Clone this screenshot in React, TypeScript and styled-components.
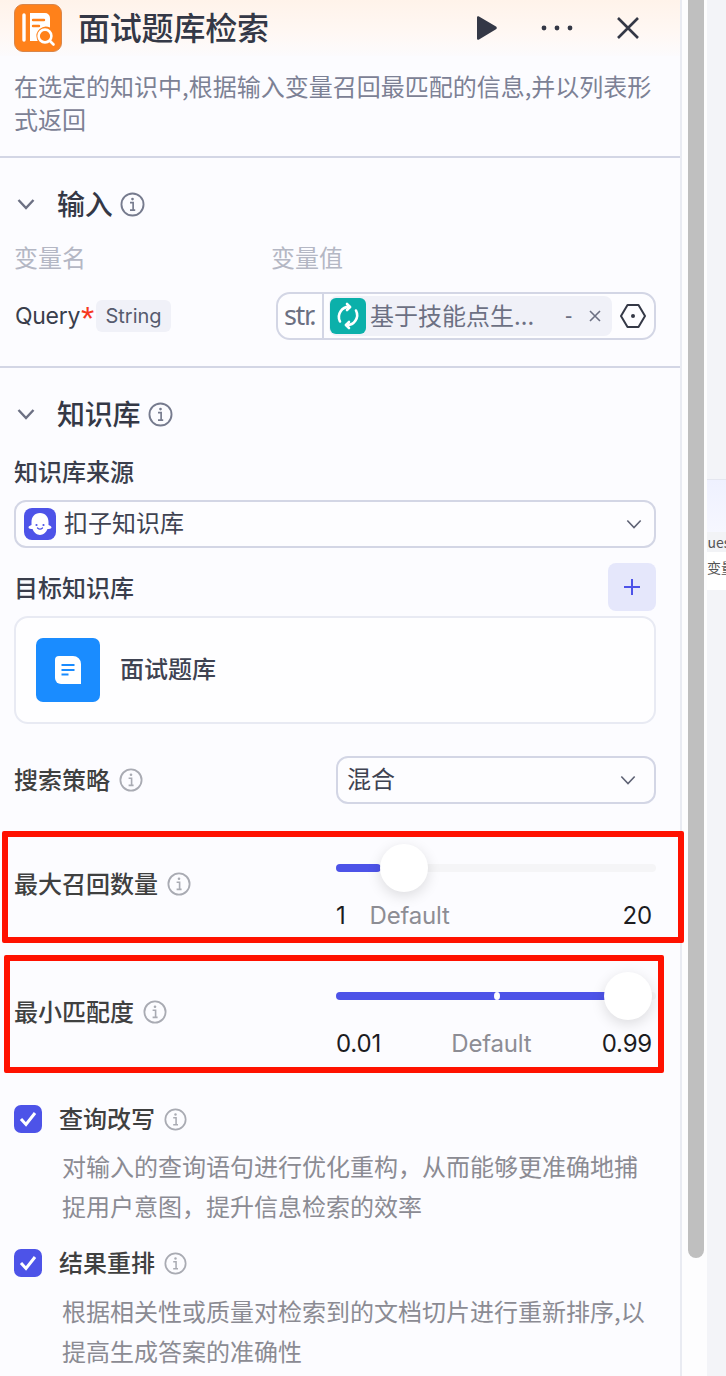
import React from "react";
import styled, { createGlobalStyle } from "styled-components";

const Global = createGlobalStyle`
  html, body { margin: 0; padding: 0; background: #fcfcff; }
  body { font-family: "Noto Sans CJK SC", "Noto Sans", sans-serif; }
  * { box-sizing: border-box; }
`;

const Page = styled.div`
  display: flex;
  width: 726px;
  height: 1376px;
  overflow: hidden;
`;
const Panel = styled.main`
  position: relative;
  z-index: 1;
  flex: 0 0 682px;
  height: 1376px;
  background: #fcfcff;
  border-right: 2px solid #e9ebf2;
`;
const Header = styled.header`
  display: flex;
  align-items: center;
  height: 56px;
  padding-left: 14px;
  background: linear-gradient(180deg, #fff3ea 0%, #fff8f4 60%, #fcfbfd 100%);
`;
const Logo = styled.div`
  flex: none;
  width: 48px;
  height: 48px;
  border-radius: 9px;
  background: #ff811a;
  border: 1.5px solid #d9864a;
  display: flex;
  align-items: center;
  justify-content: center;
`;
const Title = styled.h1`
  margin: 0 0 4px 16px;
  font-size: 32px;
  line-height: 44px;
  font-weight: 500;
  color: #343846;
  letter-spacing: -0.2px;
`;
const HeaderActions = styled.div`
  margin-left: auto;
  display: flex;
  align-items: center;
  padding-right: 40px;
`;
const ActionSlot = styled.div<{ $w: number }>`
  width: ${(p) => p.$w}px;
  display: flex;
  justify-content: center;
`;
const Description = styled.p`
  margin: 0;
  padding: 13px 24px 0 14px;
  font-size: 24px;
  line-height: 33px;
  color: #7c8195;
  border-bottom: 2px solid #d3d6e5;
  height: 102px;
`;
const Section = styled.section<{ $divider?: boolean }>`
  padding: 26px 24px 0 14px;
  ${(p) => (p.$divider ? "border-bottom: 2px solid #d3d6e5; padding-bottom: 26px;" : "")}
`;
const SectionHead = styled.div`
  display: flex;
  align-items: center;
  height: 40px;
`;
const Chevron = styled.div`
  width: 43px;
  display: flex;
  padding-left: 3px;
`;
const SectionTitle = styled.h2`
  margin: 0 8px 3px 0;
  font-size: 28px;
  line-height: 36px;
  font-weight: 500;
  color: #343846;
  letter-spacing: -0.3px;
`;
const Columns = styled.div`
  display: flex;
  align-items: center;
  height: 30px;
  margin-top: 19px;
  padding-bottom: 4px;
  font-size: 24px;
  color: #b4b7c4;
`;
const ColumnName = styled.span<{ $w?: number }>`
  width: ${(p) => (p.$w ? `${p.$w}px` : "auto")};
`;
const QueryRow = styled.div`
  display: flex;
  align-items: center;
  height: 48px;
  margin-top: 19px;
`;
const QueryName = styled.span`
  padding-left: 1px;
  font-family: "Inter", "Noto Sans", sans-serif;
  font-size: 23px;
  color: #3a3e4c;
  letter-spacing: -0.3px;
`;
const Star = styled.span`
  width: 15px;
  margin-left: 1px;
  font-family: "Liberation Sans", sans-serif;
  font-size: 34px;
  line-height: 34px;
  height: 30px;
  color: #f6381f;
`;
const TypeTag = styled.span`
  width: 75px;
  height: 32px;
  border-radius: 6px;
  background: #f0f1f8;
  color: #565b6e;
  font-family: "Inter", "Noto Sans", sans-serif;
  font-size: 20px;
  line-height: 32px;
  text-align: center;
`;
const ValueBox = styled.div`
  margin-left: 105px;
  width: 380px;
  height: 48px;
  border: 2px solid #d3d6e5;
  border-radius: 14px;
  display: flex;
  align-items: center;
  background: #fdfdff;
`;
const StrTag = styled.div`
  width: 46px;
  height: 44px;
  border-right: 2px solid #d3d6e5;
  padding-left: 6px;
  font-family: "Noto Sans", sans-serif;
  font-size: 27px;
  line-height: 42px;
  font-weight: 400;
  color: #6b7082;
  letter-spacing: -1.4px;
`;
const Chip = styled.div`
  margin-left: 5px;
  width: 283px;
  height: 40px;
  border-radius: 8px;
  background: #f0f1f8;
  display: flex;
  align-items: center;
  padding-left: 1px;
  color: #6c7083;
`;
const ChipIcon = styled.div`
  flex: none;
  width: 36px;
  height: 36px;
  border-radius: 6px;
  background: #0bb0aa;
  display: flex;
  align-items: center;
  justify-content: center;
`;
const ChipText = styled.span`
  margin: 0 0 3px 4px;
  width: 195px;
  font-size: 24px;
  line-height: 36px;
  white-space: nowrap;
`;
const ChipDash = styled.span`
  font-family: "Liberation Sans", sans-serif;
  font-size: 22px;
  width: 24px;
`;
const HexSlot = styled.div`
  margin-left: 8px;
  display: flex;
`;
const FieldLabel = styled.div`
  font-size: 24px;
  line-height: 34px;
  padding-bottom: 2px;
  height: 34px;
  font-weight: 500;
  color: #3a3e4c;
`;
const SourceLabel = styled(FieldLabel)`
  margin-top: 20px;
`;
const SelectBox = styled.div<{ $w: number }>`
  width: ${(p) => p.$w}px;
  height: 48px;
  border: 2px solid #d3d6e5;
  border-radius: 12px;
  display: flex;
  align-items: center;
  background: #fdfdff;
  flex: none;
`;
const SourceSelect = styled(SelectBox)`
  margin-top: 12px;
  padding: 0 12px 0 8px;
`;
const StrategySelect = styled(SelectBox)`
  padding: 0 18px 0 9px;
`;
const SourceIcon = styled.div`
  width: 32px;
  height: 32px;
  border-radius: 8px;
  background: #4d53e8;
  display: flex;
  align-items: center;
  justify-content: center;
`;
const SelectText = styled.span<{ $gap?: number }>`
  margin: 0 auto 4px ${(p) => p.$gap ?? 0}px;
  font-size: 24px;
  line-height: 34px;
  color: #3f4352;
`;
const TargetHead = styled.div`
  display: flex;
  align-items: center;
  justify-content: space-between;
  height: 48px;
  margin-top: 15px;
`;
const AddButton = styled.div`
  width: 48px;
  height: 48px;
  border-radius: 8px;
  background: #e5e7fb;
  display: flex;
  align-items: center;
  justify-content: center;
`;
const KnowledgeCard = styled.div`
  margin-top: 5px;
  height: 108px;
  border: 2px solid #e8eaf3;
  border-radius: 14px;
  background: #fefeff;
  display: flex;
  align-items: center;
  padding-left: 20px;
`;
const DocIcon = styled.div`
  width: 64px;
  height: 64px;
  border-radius: 7px;
  background: #1a8cff;
  display: flex;
  align-items: center;
  justify-content: center;
`;
const KnowledgeName = styled.span`
  margin: 0 0 6px 20px;
  font-size: 24px;
  font-weight: 500;
  color: #3f4352;
`;
const ParamRow = styled.div<{ $top: number }>`
  position: relative;
  display: grid;
  grid-template-columns: 322px 1fr;
  margin-top: ${(p) => p.$top}px;
`;
const ParamLabel = styled.div<{ $top: number }>`
  display: flex;
  align-items: center;
  gap: 9px;
  height: 34px;
  margin-top: ${(p) => p.$top}px;
  font-size: 24px;
  font-weight: 500;
  color: #3f4040;
`;
const LabelText = styled.span`
  margin-bottom: 3px;
`;
const Slider = styled.div`
  width: 320px;
`;
const Track = styled.div`
  position: relative;
  margin-top: 20px;
  width: 320px;
  height: 8px;
  border-radius: 4px;
  background: #f5f5f7;
`;
const Fill = styled.div`
  height: 8px;
  border-radius: 4px;
  background: #4d53e8;
`;
const Thumb = styled.div`
  position: absolute;
  top: -20px;
  width: 48px;
  height: 48px;
  border-radius: 50%;
  background: #fff;
  box-shadow: 0 4px 14px rgba(0, 0, 0, 0.13);
`;
const Notch = styled.div`
  position: absolute;
  top: 0;
  width: 6px;
  height: 8px;
  border-radius: 50%;
  background: #fff;
`;
const Marks = styled.div<{ $w: number }>`
  display: flex;
  justify-content: space-between;
  width: ${(p) => p.$w}px;
  margin-top: 27px;
  height: 32px;
  align-items: center;
  font-family: "Inter", "Liberation Sans", sans-serif;
  font-size: 24px;
  letter-spacing: -0.2px;
  color: #1c1c1f;
`;
const MarkDefault = styled.span<{ $left?: number }>`
  color: #8d8d94;
  ${(p) => (p.$left ? `margin-left: ${p.$left}px; margin-right: auto;` : "")}
`;
const OptionRow = styled.div<{ $top: number }>`
  display: flex;
  align-items: center;
  gap: 9px;
  height: 32px;
  margin-top: ${(p) => p.$top}px;
`;
const CheckBox = styled.div`
  flex: none;
  width: 28px;
  height: 28px;
  border-radius: 7px;
  background: #4d53e8;
  display: flex;
  align-items: center;
  justify-content: center;
  margin-right: 8px;
`;
const OptionLabel = styled.span`
  margin-bottom: 3px;
  font-size: 24px;
  font-weight: 500;
  color: #3f4040;
`;
const OptionDesc = styled.p<{ $top: number }>`
  margin: ${(p) => p.$top}px 0 0;
  padding-left: 48px;
  font-size: 24px;
  line-height: 40px;
  color: #8b8b93;
`;
const Highlight = styled.div<{ $x: number; $y: number; $w: number; $h: number }>`
  position: absolute;
  left: ${(p) => p.$x}px;
  top: ${(p) => p.$y}px;
  width: ${(p) => p.$w}px;
  height: ${(p) => p.$h}px;
  border: 6px solid #ff1100;
  border-radius: 2px;
  z-index: 3;
`;
const ScrollTrack = styled.div`
  flex: 0 0 25px;
  padding: 0 3px 0 6px;
  background: #fdfdfe;
`;
const ScrollThumb = styled.div`
  width: 16px;
  height: 1258px;
  background: #bfbfbf;
  border-radius: 0 0 8px 8px;
`;
const Canvas = styled.div`
  flex: 1;
  height: 1376px;
  background-color: #f3f4f8;
  background-image: radial-gradient(#e6e7ec 1.5px, transparent 1.5px);
  background-size: 40px 40px;
  padding-top: 479px;
  overflow: hidden;
`;
const MiniNode = styled.div`
  width: 30px;
  height: 111px;
  background: #ffffff;
  border-top: 1px solid #e4e6ef;
  font-size: 14px;
  color: #555;
  white-space: nowrap;
`;
const MiniHead = styled.div`
  height: 52px;
  background: linear-gradient(180deg, #eff1ff, #f6f7ff);
`;
const MiniBand = styled.div`
  height: 20px;
  line-height: 20px;
  background: #f2f3f6;
  margin-left: -10px;
`;
const MiniVar = styled.div`
  margin-top: 5px;
  line-height: 20px;
`;

const Info = ({ size = 24, color = "#a9abb3" }: { size?: number; color?: string }) => (
  <svg width={size} height={size} viewBox="0 0 24 24" fill="none">
    <circle cx="12" cy="12" r="10.6" stroke={color} strokeWidth="1.8" />
    <circle cx="12" cy="6.8" r="1.3" fill={color} />
    <path d="M9.6 10.2h3v7M9.6 17.4h5" stroke={color} strokeWidth="1.6" />
  </svg>
);
const Down = ({ size = 18, color = "#6c7083", w = 2.4 }: { size?: number; color?: string; w?: number }) => (
  <svg width={size} height={size} viewBox="0 0 18 18" fill="none">
    <path d="M1.5 5l7.5 8 7.5-8" stroke={color} strokeWidth={w} />
  </svg>
);
const LogoGlyph = () => (
  <svg width="38" height="38" viewBox="0 0 38 38" fill="none">
    <path d="M5 6v25" stroke="#fff" strokeWidth="3.4" strokeLinecap="round" />
    <path
      d="M11 4h15a5 5 0 0 1 5 5v9.5a9.5 9.5 0 0 0-13 11.7c.2.8.5 1.4.8 1.8H11z"
      fill="#fff"
    />
    <path d="M14 11h11M14 17h6" stroke="#ff811a" strokeWidth="2.4" strokeLinecap="round" />
    <circle cx="26" cy="27" r="6.4" stroke="#fff" strokeWidth="2.6" />
    <path d="M31 32l3.5 3.5" stroke="#fff" strokeWidth="2.6" strokeLinecap="round" />
  </svg>
);
const Tick = () => (
  <svg width="18" height="16" viewBox="0 0 18 16" fill="none">
    <path d="M2 8l5 5.500L16 2" stroke="#fff" strokeWidth="3" />
  </svg>
);

const Parameter = ({
  label,
  labelTop,
  percent,
  thumb,
  notch,
  children,
}: {
  label: string;
  labelTop: number;
  percent: number;
  thumb: number;
  notch?: number;
  children: React.ReactNode;
}) => (
  <>
    <ParamLabel $top={labelTop}>
      <LabelText>{label}</LabelText>
      <Info />
    </ParamLabel>
    <Slider>
      <Track>
        <Fill style={{ width: `${percent}%` }} />
        {notch !== undefined && <Notch style={{ left: notch }} />}
        <Thumb style={{ left: thumb }} />
      </Track>
      <Marks $w={316}>{children}</Marks>
    </Slider>
  </>
);

export default function App() {
  return (
    <Page>
      <Global />
      <Panel>
        <Header>
          <Logo>
            <LogoGlyph />
          </Logo>
          <Title>面试题库检索</Title>
          <HeaderActions>
            <ActionSlot $w={24}>
              <svg width="24" height="26" viewBox="0 0 24 26">
                <path d="M3 2.5c0-1 1-1.6 2-1L22 11.5c1 .6 1 2.2 0 2.8L5 24.5c-1 .6-2 0-2-1z" fill="#343846" />
              </svg>
            </ActionSlot>
            <ActionSlot $w={118}>
              <svg width="32" height="6" viewBox="0 0 32 6">
                <circle cx="3" cy="3" r="2.4" fill="#343846" />
                <circle cx="16" cy="3" r="2.4" fill="#343846" />
                <circle cx="29" cy="3" r="2.4" fill="#343846" />
              </svg>
            </ActionSlot>
            <ActionSlot $w={24}>
              <svg width="24" height="24" viewBox="0 0 24 24" fill="none">
                <path d="M2 2l20 20M22 2L2 22" stroke="#343846" strokeWidth="2.6" />
              </svg>
            </ActionSlot>
          </HeaderActions>
        </Header>
        <Description>在选定的知识中,根据输入变量召回最匹配的信息,并以列表形式返回</Description>

        <Section $divider>
          <SectionHead>
            <Chevron>
              <Down />
            </Chevron>
            <SectionTitle>输入</SectionTitle>
            <Info size={25} color="#767b8e" />
          </SectionHead>
          <Columns>
            <ColumnName $w={257}>变量名</ColumnName>
            <ColumnName>变量值</ColumnName>
          </Columns>
          <QueryRow>
            <QueryName>Query</QueryName>
            <Star>*</Star>
            <TypeTag>String</TypeTag>
            <ValueBox>
              <StrTag>str.</StrTag>
              <Chip>
                <ChipIcon>
                  <svg width="28" height="28" viewBox="0 0 28 28" fill="none">
                    <path d="M16 5A10 10 0 0 0 6 19.500" stroke="#fff" strokeWidth="2.600" strokeLinecap="round" />
                    <path d="M12 23A10 10 0 0 0 22 8.500" stroke="#fff" strokeWidth="2.600" strokeLinecap="round" />
                    <path d="M13 2l3 3-3 3" stroke="#fff" strokeWidth="2.600" strokeLinecap="round" strokeLinejoin="round" />
                    <path d="M15 20l-3 3 3 3" stroke="#fff" strokeWidth="2.600" strokeLinecap="round" strokeLinejoin="round" />
                  </svg>
                </ChipIcon>
                <ChipText>基于技能点生...</ChipText>
                <ChipDash>-</ChipDash>
                <svg width="12" height="12" viewBox="0 0 12 12" fill="none">
                  <path d="M1 1l10 10M11 1L1 11" stroke="#6c7083" strokeWidth="1.6" />
                </svg>
              </Chip>
              <HexSlot>
                <svg width="26" height="26" viewBox="0 0 26 26" fill="none">
                  <path d="M7.500 2h11L25 13l-6.500 11h-11L1 13z" stroke="#343846" strokeWidth="2" strokeLinejoin="round" />
                  <circle cx="13" cy="13" r="2" fill="#343846" />
                </svg>
              </HexSlot>
            </ValueBox>
          </QueryRow>
        </Section>

        <Section>
          <SectionHead>
            <Chevron>
              <Down />
            </Chevron>
            <SectionTitle>知识库</SectionTitle>
            <Info size={25} color="#767b8e" />
          </SectionHead>
          <SourceLabel>知识库来源</SourceLabel>
          <SourceSelect $w={642}>
            <SourceIcon>
              <svg width="28" height="28" viewBox="0 0 28 28" fill="none">
                <path
                  d="M14 3c5.500 0 8.500 4 8.500 9v3c1.500.5 3 1.200 3 2.500s-2.500 1.500-4 1.500c-1 3-4.500 6-7.500 6s-6.500-3-7.500-6c-1.500 0-4 0-4-1.500s1.500-2 3-2.500v-3c0-5 3-9 8.500-9z"
                  fill="#fff"
                />
                <circle cx="10.500" cy="15" r="1.100" fill="#4d53e8" />
                <circle cx="17.500" cy="15" r="1.100" fill="#4d53e8" />
                <path d="M11.500 18c1.500 1.300 3.500 1.300 5 0" stroke="#4d53e8" strokeWidth="1.300" strokeLinecap="round" />
              </svg>
            </SourceIcon>
            <SelectText $gap={8}>扣子知识库</SelectText>
            <Down size={16} color="#5f6375" w={1.8} />
          </SourceSelect>
          <TargetHead>
            <FieldLabel>目标知识库</FieldLabel>
            <AddButton>
              <svg width="18" height="18" viewBox="0 0 18 18" fill="none">
                <path d="M9 1v16M1 9h16" stroke="#4d53e8" strokeWidth="2" />
              </svg>
            </AddButton>
          </TargetHead>
          <KnowledgeCard>
            <DocIcon>
              <svg width="26" height="28" viewBox="0 0 26 28" fill="none">
                <path d="M4 0h14a8 8 0 0 1 8 8v20H6a6 6 0 0 1-6-6V4a4 4 0 0 1 4-4z" fill="#fff" />
                <path d="M6.500 9h13M6.500 14h13M6.500 18.500h7" stroke="#1a8cff" strokeWidth="2" />
              </svg>
            </DocIcon>
            <KnowledgeName>面试题库</KnowledgeName>
          </KnowledgeCard>
          <ParamRow $top={32}>
            <ParamLabel $top={7}>
              <LabelText>搜索策略</LabelText>
              <Info />
            </ParamLabel>
            <StrategySelect $w={320}>
              <SelectText>混合</SelectText>
              <Down size={16} color="#5f6375" w={1.8} />
            </StrategySelect>
          </ParamRow>
          <ParamRow $top={40}>
            <Parameter label="最大召回数量" labelTop={23} percent={14} thumb={44}>
              <span>1</span>
              <MarkDefault $left={24}>Default</MarkDefault>
              <span>20</span>
            </Parameter>
          </ParamRow>
          <ParamRow $top={41}>
            <Parameter label="最小匹配度" labelTop={23} percent={98} thumb={268} notch={158}>
              <span>0.01</span>
              <MarkDefault>Default</MarkDefault>
              <span>0.99</span>
            </Parameter>
          </ParamRow>
          <OptionRow $top={44}>
            <CheckBox>
              <Tick />
            </CheckBox>
            <OptionLabel>查询改写</OptionLabel>
            <Info size={23} />
          </OptionRow>
          <OptionDesc $top={11}>对输入的查询语句进行优化重构，从而能够更准确地捕捉用户意图，提升信息检索的效率</OptionDesc>
          <OptionRow $top={21}>
            <CheckBox>
              <Tick />
            </CheckBox>
            <OptionLabel>结果重排</OptionLabel>
            <Info size={23} />
          </OptionRow>
          <OptionDesc $top={12}>根据相关性或质量对检索到的文档切片进行重新排序,以提高生成答案的准确性</OptionDesc>
        </Section>
        <Highlight $x={2} $y={831} $w={682} $h={112} />
        <Highlight $x={4} $y={955} $w={660} $h={118} />
      </Panel>
      <ScrollTrack>
        <ScrollThumb />
      </ScrollTrack>
      <Canvas>
        <MiniNode>
          <MiniHead />
          <MiniBand>Question</MiniBand>
          <MiniVar>变量</MiniVar>
        </MiniNode>
      </Canvas>
    </Page>
  );
}
